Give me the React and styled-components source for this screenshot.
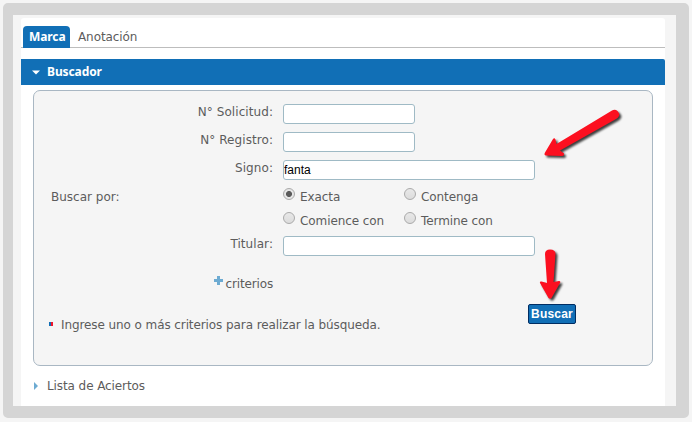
import React from 'react';
import styled, { createGlobalStyle, css } from 'styled-components';

const Global = createGlobalStyle`
  * { box-sizing: border-box; }
  body {
    margin: 0;
    background: #f5f5f5;
    color: #5c5c5c;
    font: 12px/16px "DejaVu Sans", Verdana, sans-serif;
    letter-spacing: -0.09px;
  }
`;

const Page = styled.div`
  position: relative;
  width: 692px;
  height: 422px;
  padding: 3px;
  overflow: hidden;
`;

const Frame = styled.div`
  width: 686px;
  height: 415px;
  border: solid #d5d5d5;
  border-width: 12px 13px 12px 10px;
  border-radius: 5px;
  padding: 3px 11px 0 8px;
`;

const Panel = styled.main`
  height: 388px;
  background: #fff;
  border-radius: 3px 3px 0 0;
`;

const Tabs = styled.nav`
  display: flex;
  align-items: flex-end;
  height: 30px;
  padding-left: 2px;
  border-bottom: 1px solid #bdbdbd;
`;

const Tab = styled.a`
  height: 21px;
  padding: 3px 0 0 8px;
  ${(p) =>
    p.$active &&
    css`
      width: 47px;
      height: 22px;
      margin-bottom: -1px;
      padding: 3px 0 0 6px;
      border-radius: 4px 4px 0 0;
      background: #116fb6;
      color: #fff;
      font-family: "Noto Sans", sans-serif;
      font-weight: bold;
      letter-spacing: -0.1px;
    `}
`;

const SectionHeader = styled.header`
  display: flex;
  align-items: center;
  height: 40px;
  padding-left: 13px;
  gap: 9px;
  ${(p) =>
    p.$open &&
    css`
      height: 26px;
      margin-top: 11px;
      padding-left: 11px;
      gap: 7px;
      border-radius: 0 2px 0 0;
      background: #116fb6;
      color: #fff;
      font-family: "Noto Sans", sans-serif;
      font-weight: bold;
      letter-spacing: -0.1px;
    `}
`;

const SearchForm = styled.section`
  height: 276px;
  margin: 5px 12px 0;
  padding: 13px 0 0 17px;
  border: 1px solid #a9b7c3;
  border-radius: 7px;
  background: #f5f5f5;
`;

const Row = styled.div`
  display: grid;
  grid-template-columns: 222px 1fr;
  column-gap: 10px;
  height: ${(p) => p.$height || 28}px;
`;

const Label = styled.label`
  text-align: ${(p) => (p.$start ? 'left' : 'right')};
  padding-top: ${(p) => (p.$start ? 5 : 0)}px;
  letter-spacing: ${(p) => (p.$start ? 0 : 0.07)}px;
`;

const Field = styled.input`
  width: ${(p) => (p.$wide ? 252 : 132)}px;
  height: 20px;
  padding: 0;
  border: 1px solid #9fbac5;
  border-radius: 3px;
  outline: 0;
  background: #fff;
  color: #000;
  font: 12px "Liberation Sans", Arial, sans-serif;
`;

const Options = styled.div`
  display: grid;
  grid-template-columns: 121px 140px;
  grid-auto-rows: 24px;
`;

const Option = styled.label`
  display: flex;
  gap: 5px;
  line-height: 16px;
  span { padding-top: 5px; }
`;

const Radio = styled.input`
  appearance: none;
  flex: none;
  width: 12px;
  height: 12px;
  margin: 4px 0 0;
  border: 1px solid #aaa;
  border-radius: 50%;
  background: linear-gradient(#e8e8e8, #dcdcdc);
  &:checked {
    background: radial-gradient(circle, #5a5a5a 0 2.6px, #e6e6e6 3.4px);
  }
`;

const More = styled.a`
  display: flex;
  justify-content: flex-end;
  gap: 3px;
  letter-spacing: -0.15px;
`;

const Footer = styled.div`
  display: flex;
  height: 40px;
`;

const Note = styled.p`
  display: flex;
  align-items: center;
  width: 479px;
  height: 16px;
  margin: 13px 0 0 -2px;
  gap: 8px;
`;

const Bullet = styled.i`
  flex: none;
  width: 4px;
  height: 4px;
  margin-top: -2px;
  background: linear-gradient(90deg, #116fb6 50%, #f0142a 50%);
`;

const Submit = styled.button`
  width: 48px;
  height: 20px;
  padding: 0;
  border: 1px solid #002d62;
  border-radius: 2px;
  background: #116fb6;
  color: #fff;
  font: bold 12px "Liberation Sans", Arial, sans-serif;
  letter-spacing: 0.2px;
`;

const Annotations = styled.svg`
  position: absolute;
  inset: 0;
  pointer-events: none;
  filter: drop-shadow(2px 2px 1.2px rgba(0, 0, 0, 0.75));
`;

const OPTIONS = ['Exacta', 'Contenga', 'Comience con', 'Termine con'];

export default function App() {
  return (
    <Page>
      <Global />
      <Frame>
        <Panel>
          <Tabs>
            <Tab $active>Marca</Tab>
            <Tab>Anotación</Tab>
          </Tabs>
          <SectionHeader $open>
            <svg width="8" height="6"><path d="M0 1.500H8L4 5.500Z" fill="#fff" /></svg>
            Buscador
          </SectionHeader>
          <SearchForm>
            <Row><Label>N° Solicitud:</Label><Field /></Row>
            <Row><Label>N° Registro:</Label><Field /></Row>
            <Row $height={24}><Label>Signo:</Label><Field $wide defaultValue="fanta" /></Row>
            <Row $height={52}>
              <Label $start>Buscar por:</Label>
              <Options>
                {OPTIONS.map((name) => (
                  <Option key={name}>
                    <Radio type="radio" name="match" defaultChecked={name === 'Exacta'} />
                    <span>{name}</span>
                  </Option>
                ))}
              </Options>
            </Row>
            <Row $height={40}><Label>Titular:</Label><Field $wide /></Row>
            <Row>
              <More>
                <svg width="9" height="9"><path d="M3 0H6V3H9V6H6V9H3V6H0V3H3Z" fill="#6dabd2" /></svg>
                criterios
              </More>
            </Row>
            <Footer>
              <Note><Bullet />Ingrese uno o más criterios para realizar la búsqueda.</Note>
              <Submit>Buscar</Submit>
            </Footer>
          </SearchForm>
          <SectionHeader>
            <svg width="4" height="8"><path d="M0 0L4 4L0 8Z" fill="#6dabd2" /></svg>
            Lista de Aciertos
          </SectionHeader>
        </Panel>
      </Frame>
      <Annotations width="692" height="422" fill="#fc1020">
        <path d="M612 110.500Q615 109 617.500 111Q620 113.500 619 116Q618 118 616 119L560 150.500L564 153.500Q564.500 155.500 562 156L546 155.500Q543.500 155 545 152.500L553 139Q554.500 137.500 555.500 139.500L556.500 144Z" />
        <path d="M545 254Q545 249.500 550 249.500Q555.500 249.500 555.500 254L553.500 282L559 281Q561 281 560 283L551.500 298Q550 299.500 548.500 298L540 283Q539.500 281 541.500 281.500L547 283Z" />
      </Annotations>
    </Page>
  );
}
